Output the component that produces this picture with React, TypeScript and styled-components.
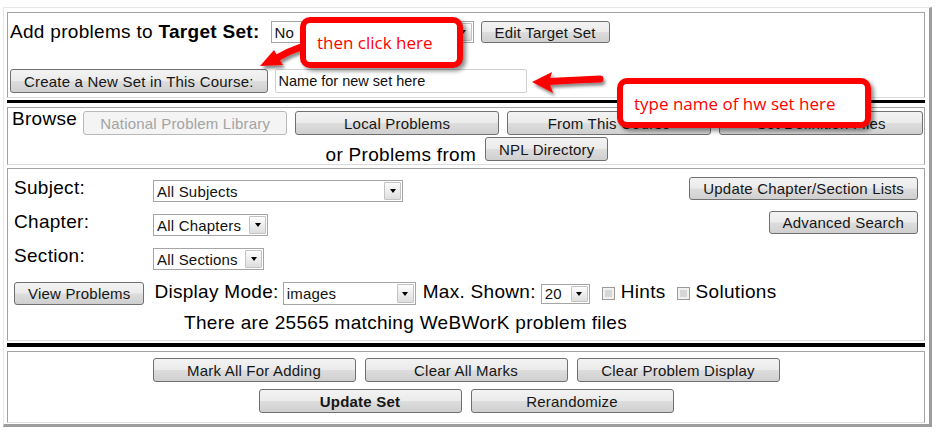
import React from "react";
import styled, { createGlobalStyle } from "styled-components";

const GlobalStyle = createGlobalStyle`
  html, body { margin: 0; padding: 0; background: #ffffff; }
  body { font-family: "Liberation Sans", Arial, sans-serif; color: #000; }
  * { box-sizing: border-box; }
`;

const Page = styled.div`
  position: relative;
  width: 942px;
  height: 432px;
  overflow: hidden;
  padding: 7px 0 0 3px;
`;

const Frame = styled.div`
  width: 929px;
  border-top: 1px solid #e6e6e6;
  border-left: 1px solid #e6e6e6;
  border-right: 3px solid #9d9d9d;
  border-bottom: 3px solid #9d9d9d;
  padding: 4px 4px 1px 3px;
  display: flex;
  flex-direction: column;
`;

const Panel = styled.div`
  border: 1px solid;
  border-color: #a3a3a3 #a3a3a3 #dcdcdc #a3a3a3;
  display: flex;
  flex-direction: column;
`;

const TargetPanel = styled(Panel)`
  padding: 8px 2px 4px 2px;
  gap: 26px;
`;

const BrowsePanel = styled(Panel)`
  padding: 3px 2px 3px 4px;
  gap: 2px;
`;

const SearchPanel = styled(Panel)`
  margin-top: 3px;
  padding: 8px 6px 6px 6px;
`;

const ActionPanel = styled(Panel)`
  padding: 6px 2px 9px 2px;
  gap: 7px;
`;

const Rule = styled.div<{ $h: number }>`
  height: ${(p) => p.$h}px;
  background: #000;
  margin: 2px 0 4px;
`;

const Row = styled.div<{ $gap?: number }>`
  display: flex;
  align-items: center;
  gap: ${(p) => p.$gap ?? 0}px;
`;

const CenterRow = styled.div<{ $gap?: number }>`
  display: flex;
  justify-content: center;
  align-items: flex-end;
  gap: ${(p) => p.$gap ?? 0}px;
`;

const BigText = styled.span<{ $ml?: number; $mr?: number }>`
  font-size: 19px;
  letter-spacing: 0.3px;
  line-height: 22px;
  white-space: nowrap;
  margin-left: ${(p) => p.$ml ?? 0}px;
  margin-right: ${(p) => p.$mr ?? 0}px;
  b { font-weight: 700; }
`;

const TopText = styled(BigText)`
  align-self: flex-start;
  line-height: 16px;
`;

const BottomText = styled(BigText)`
  align-self: flex-end;
  line-height: 12px;
`;

const ControlText = styled(BigText)`
  line-height: 18px;
  padding-bottom: 4px;
`;

const Button = styled.button<{ $w?: number; $h?: number; $bold?: boolean; $ml?: number }>`
  flex: none;
  font-family: "Liberation Sans", Arial, sans-serif;
  font-size: 15px;
  letter-spacing: 0.2px;
  font-weight: ${(p) => (p.$bold ? 700 : 400)};
  color: #161616;
  height: ${(p) => p.$h ?? 24}px;
  width: ${(p) => (p.$w ? `${p.$w}px` : "auto")};
  padding: ${(p) => (p.$w ? "0" : "0 13px")};
  margin: 0 0 0 ${(p) => p.$ml ?? 0}px;
  border: 1px solid #707070;
  border-radius: 3px;
  background: linear-gradient(to bottom, #f3f3f3 0%, #ebebeb 48%, #dddddd 52%, #cfcfcf 100%);
  line-height: 1;
  white-space: nowrap;
  cursor: default;
`;

const DisabledButton = styled(Button)`
  color: #a3a3a3;
  border-color: #b8b8b8;
  background: #f4f4f4;
`;

const SelectBox = styled.div<{ $w: number; $h?: number; $ml?: number }>`
  flex: none;
  display: flex;
  align-items: stretch;
  width: ${(p) => p.$w}px;
  height: ${(p) => p.$h ?? 22}px;
  margin-left: ${(p) => p.$ml ?? 0}px;
  border: 1px solid #a5a5a5;
  background: #fff;
  font-size: 15px;
  letter-spacing: 0.2px;
  color: #111;
`;

const SelectText = styled.span`
  flex: 1;
  display: flex;
  align-items: center;
  padding-left: 3px;
  white-space: nowrap;
  overflow: hidden;
`;

const SelectArrow = styled.span`
  width: 17px;
  margin: 1px;
  border: 1px solid #c3c3c3;
  border-radius: 1px;
  background: linear-gradient(to bottom, #fdfdfd, #dedede);
  display: flex;
  align-items: center;
  justify-content: center;
  &::after {
    content: "";
    border-left: 3.5px solid transparent;
    border-right: 3.5px solid transparent;
    border-top: 4px solid #000;
  }
`;

const TextInput = styled.div`
  width: 252px;
  height: 24px;
  margin-left: 7px;
  border: 1px solid #d0d0d0;
  border-radius: 2px;
  display: flex;
  align-items: center;
  padding-left: 3px;
  font-size: 14.5px;
  color: #111;
  white-space: nowrap;
`;

const CheckBox = styled.span<{ $ml?: number }>`
  flex: none;
  width: 13px;
  height: 13px;
  margin-left: ${(p) => p.$ml ?? 0}px;
  margin-right: 6px;
  border: 1px solid #9a9a9a;
  background: #d6d6d6;
  box-shadow: inset 0 0 0 2px #f1f1f1;
`;

const TopArea = styled.div`
  display: flex;
  align-items: flex-start;
`;

const Fields = styled.div`
  display: grid;
  grid-template-columns: 139px auto;
  grid-auto-rows: 22px;
  row-gap: 12px;
  padding-top: 3px;
  align-items: start;
`;

const FieldLabel = styled(BigText)`
  line-height: 16px;
`;

const RightButtons = styled.div`
  margin-left: auto;
  display: flex;
  flex-direction: column;
  align-items: flex-end;
  gap: 11px;
`;

const ControlsRow = styled(Row)`
  margin-top: 12px;
`;

const Message = styled.div`
  width: 783px;
  margin-top: 7px;
  text-align: center;
  font-size: 19px;
  letter-spacing: 0.3px;
  line-height: 22px;
`;

const Callout = styled.div<{ $x: number; $y: number; $w: number; $h: number }>`
  position: absolute;
  left: ${(p) => p.$x}px;
  top: ${(p) => p.$y}px;
  width: ${(p) => p.$w}px;
  height: ${(p) => p.$h}px;
  border: 6px solid #ff0000;
  border-radius: 10px;
  background: #fff;
  box-shadow: 3px 3px 4px rgba(0, 0, 0, 0.45);
  display: flex;
  align-items: center;
  padding-left: 11px;
  color: #ff0000;
  font-family: "Open Sans", "Liberation Sans", sans-serif;
  font-size: 17px;
  white-space: nowrap;
`;

const ArrowLayer = styled.svg`
  position: absolute;
  left: 0;
  top: 0;
  pointer-events: none;
`;

function Select({ w, h, ml, text }: { w: number; h?: number; ml?: number; text: string }) {
  return (
    <SelectBox $w={w} $h={h} $ml={ml}>
      <SelectText>{text}</SelectText>
      <SelectArrow />
    </SelectBox>
  );
}

function Arrows() {
  return (
    <ArrowLayer width={942} height={432} viewBox="0 0 942 432">
      <defs>
        <filter id="shadow" x="-30%" y="-30%" width="160%" height="160%">
          <feDropShadow dx="2" dy="3" stdDeviation="1.5" floodColor="#000" floodOpacity="0.45" />
        </filter>
      </defs>
      <g filter="url(#shadow)" fill="#ff0000" stroke="none">
        <path d="M277 58 Q289 51 301 47" stroke="#ff0000" strokeWidth="7" strokeLinecap="round" fill="none" />
        <path d="M260 66 L274 50 L278 57 L283 65 Z" />
        <path d="M549 81.5 Q575 80 600 79" stroke="#ff0000" strokeWidth="7" strokeLinecap="round" fill="none" />
        <path d="M532 82 L552 72 L549 82 L553 93 Z" />
      </g>
    </ArrowLayer>
  );
}

export default function App() {
  return (
    <>
      <GlobalStyle />
      <Page>
        <Frame>
          <TargetPanel>
            <Row>
              <BigText $mr={11}>
                Add problems to <b>Target Set:</b>
              </BigText>
              <Select w={203} text="No" />
              <Button $h={22} $ml={7}>Edit Target Set</Button>
            </Row>
            <Row>
              <Button>Create a New Set in This Course:</Button>
              <TextInput>Name for new set here</TextInput>
            </Row>
          </TargetPanel>
          <Rule $h={3} />
          <BrowsePanel>
            <Row $gap={8}>
              <TopText $mr={-2}>Browse</TopText>
              <DisabledButton $w={204}>National Problem Library</DisabledButton>
              <Button $w={204}>Local Problems</Button>
              <Button $w={204}>From This Course</Button>
              <Button $w={204}>Set Definition Files</Button>
            </Row>
            <CenterRow $gap={9}>
              <BottomText>or Problems from</BottomText>
              <Button>NPL Directory</Button>
            </CenterRow>
          </BrowsePanel>
          <SearchPanel>
            <TopArea>
              <Fields>
                <FieldLabel>Subject:</FieldLabel>
                <Select w={250} text="All Subjects" />
                <FieldLabel>Chapter:</FieldLabel>
                <Select w={115} text="All Chapters" />
                <FieldLabel>Section:</FieldLabel>
                <Select w={111} text="All Sections" />
              </Fields>
              <RightButtons>
                <Button $h={23}>Update Chapter/Section Lists</Button>
                <Button $h={23}>Advanced Search</Button>
              </RightButtons>
            </TopArea>
            <ControlsRow>
              <Button $h={23}>View Problems</Button>
              <ControlText $ml={10}>Display Mode:</ControlText>
              <Select w={133} h={23} ml={4} text="images" />
              <ControlText $ml={7}>Max. Shown:</ControlText>
              <Select w={49} h={20} ml={5} text="20" />
              <CheckBox $ml={12} />
              <ControlText>Hints</ControlText>
              <CheckBox $ml={11} />
              <ControlText>Solutions</ControlText>
            </ControlsRow>
            <Message>There are 25565 matching WeBWorK problem files</Message>
          </SearchPanel>
          <Rule $h={4} />
          <ActionPanel>
            <CenterRow $gap={9}>
              <Button $w={203}>Mark All For Adding</Button>
              <Button $w={203}>Clear All Marks</Button>
              <Button $w={203}>Clear Problem Display</Button>
            </CenterRow>
            <CenterRow $gap={9}>
              <Button $w={203} $bold>Update Set</Button>
              <Button $w={203}>Rerandomize</Button>
            </CenterRow>
          </ActionPanel>
        </Frame>
        <Arrows />
        <Callout $x={300} $y={17} $w={163} $h={51}>then click here</Callout>
        <Callout $x={617} $y={78} $w={254} $h={50}>type name of hw set here</Callout>
      </Page>
    </>
  );
}
